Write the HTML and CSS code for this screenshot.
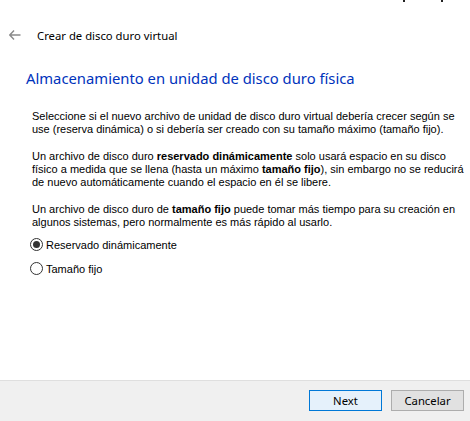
FILE: index.html
```html
<!DOCTYPE html>
<html lang="es">
<head>
<meta charset="utf-8">
<title>Crear de disco duro virtual</title>
<link rel="stylesheet" href="styles.css">
</head>
<body>
<div class="window">
  <div class="topmarks"><span class="mark m1"></span><span class="mark m2"></span></div>
  <header class="header">
    <svg class="back" width="12" height="10" viewBox="0 0 12 10" aria-hidden="true">
      <path d="M5 0.5 L0.8 5 L5 9.5 M0.8 5 H11.5" fill="none" stroke="#8a8a8a" stroke-width="1.4"/>
    </svg>
    <span class="title">Crear de disco duro virtual</span>
  </header>
  <main class="content">
    <h1 class="heading">Almacenamiento en unidad de disco duro física</h1>
    <div class="paras">
      <p class="para">Seleccione si el nuevo archivo de unidad de disco duro virtual debería crecer según se<br>use (reserva dinámica) o si debería ser creado con su tamaño máximo (tamaño fijo).</p>
      <p class="para">Un archivo de disco duro <b>reservado dinámicamente</b> solo usará espacio en su disco<br>físico a medida que se llena (hasta un máximo <b>tamaño fijo</b>), sin embargo no se reducirá<br>de nuevo automáticamente cuando el espacio en él se libere.</p>
      <p class="para">Un archivo de disco duro de <b>tamaño fijo</b> puede tomar más tiempo para su creación en<br>algunos sistemas, pero normalmente es más rápido al usarlo.</p>
    </div>
    <div class="options">
      <label class="option"><span class="radio checked"></span>Reservado dinámicamente</label>
      <label class="option"><span class="radio"></span>Tamaño fijo</label>
    </div>
  </main>
  <footer class="footer">
    <button class="btn btn-default">Next</button>
    <button class="btn">Cancelar</button>
  </footer>
</div>
</body>
</html>
```
FILE: styles.css
```css
* { box-sizing: border-box; }
html, body { margin: 0; padding: 0; background: #ffffff; }
.window {
  position: relative;
  width: 470px;
  height: 421px;
  display: flex;
  flex-direction: column;
  font-family: "Noto Sans", "Open Sans", sans-serif;
}
.topmarks { position: absolute; top: 0; left: 0; width: 470px; height: 2px; }
.mark { position: absolute; top: 0; width: 2px; height: 2px; background: #222; }
.m1 { left: 403px; }
.m2 { left: 441px; }
.header {
  display: flex;
  align-items: center;
  height: 30px;
  margin-top: 20px;
  padding-left: 9px;
}
.back { flex: none; }
.title {
  margin-left: 16px;
  font-size: 11.3px;
  color: #000;
}
.content {
  flex: 1;
  padding-left: 26px;
}
.heading {
  margin: 17px 0 0 0;
  font-size: 14.8px;
  font-weight: normal;
  color: #0033bc;
  line-height: 22px;
}
.paras {
  display: flex;
  flex-direction: column;
  gap: 14px;
  margin: 21px 0 0 6px;
}
.para {
  margin: 0;
  font-family: "Liberation Sans", Arial, sans-serif;
  font-size: 11px;
  line-height: 13px;
  color: #000;
  white-space: nowrap;
}
.para b { font-weight: bold; }
.options {
  display: flex;
  flex-direction: column;
  gap: 11px;
  margin-left: 4px;
  margin-top: 9px;
}
.option {
  display: flex;
  align-items: center;
  font-family: "Liberation Sans", Arial, sans-serif;
  font-size: 11px;
  height: 13px;
  color: #000;
}
.radio {
  width: 13px;
  height: 13px;
  border: 1px solid #333;
  border-radius: 50%;
  margin-right: 3px;
  position: relative;
  background: #fff;
}
.radio.checked::after {
  content: "";
  position: absolute;
  left: 2px; top: 2px;
  width: 7px; height: 7px;
  border-radius: 50%;
  background: #333;
}
.footer {
  height: 41px;
  background: #f0f0f0;
  border-top: 1px solid #dfdfdf;
  display: flex;
  justify-content: flex-end;
  align-items: flex-start;
  gap: 9px;
  padding: 9px 6px 0 0;
}
.btn {
  width: 73px;
  height: 21px;
  font-family: "Noto Sans", "Open Sans", sans-serif;
  font-size: 11.3px;
  color: #000;
  background: #e1e1e1;
  border: 1px solid #adadad;
  padding: 0;
  line-height: 19px;
}
.btn-default {
  background: #e5f1fb;
  border: 1px solid #0078d7;
}
```
